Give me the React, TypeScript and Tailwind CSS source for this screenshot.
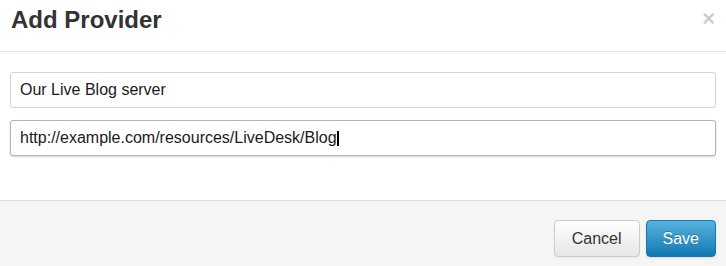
import React from 'react';

// --- Campos del formulario ---
const fields = [
  { value: 'Our Live Blog server', focused: false },
  { value: 'http://example.com/resources/LiveDesk/Blog', focused: true },
];

function FakeInput({ value, focused }: { value: string; focused: boolean }) {
  return (
    <div
      className={
        'h-[36px] rounded-[3px] border bg-white px-[9px] flex items-center text-[16px] text-[#1a1a1a] ' +
        (focused
          ? 'border-[#b3b3b3] shadow-[0_1px_2px_rgba(0,0,0,0.18)]'
          : 'border-[#d4d4d4]')
      }
    >
      <span>{value}</span>
      {focused && <span className="inline-block w-[2px] h-[15px] bg-black" />}
    </div>
  );
}

export default function App() {
  return (
    <div className="w-[726px] h-[266px] flex flex-col bg-white font-['Liberation_Sans',Arial,sans-serif]">
      <header className="flex justify-between items-start border-b border-[#e5e5e5] pl-[11px] pr-[11px] pt-[6px] pb-[18px]">
        <h3 className="text-[24px] leading-[27px] font-bold text-[#333]">Add Provider</h3>
        <button className="text-[22px] leading-[20px] font-bold text-black opacity-20 mt-[3px]">×</button>
      </header>

      <main className="flex flex-col gap-[12px] px-[10px] pt-[20px] pb-[44px]">
        {fields.map((f) => (
          <FakeInput key={f.value} value={f.value} focused={f.focused} />
        ))}
      </main>

      <footer className="flex-1 flex justify-end items-start gap-[6px] bg-[#f5f5f5] border-t border-[#dddddd] pt-[19px] pr-[10px]">
        <button className="h-[37px] px-[17px] rounded-[4px] border border-[#cccccc] bg-gradient-to-b from-white to-[#e6e6e6] text-[16px] text-[#333] shadow-[inset_0_1px_0_rgba(255,255,255,0.2),0_1px_2px_rgba(0,0,0,0.05)]">
          Cancel
        </button>
        <button className="h-[37px] px-[16px] rounded-[4px] border border-[#1a76a8] bg-gradient-to-b from-[#55b3de] to-[#0d79b3] text-[16px] text-white [text-shadow:0_-1px_0_rgba(0,0,0,0.25)] shadow-[0_1px_2px_rgba(0,0,0,0.1)]">
          Save
        </button>
      </footer>
    </div>
  );
}
